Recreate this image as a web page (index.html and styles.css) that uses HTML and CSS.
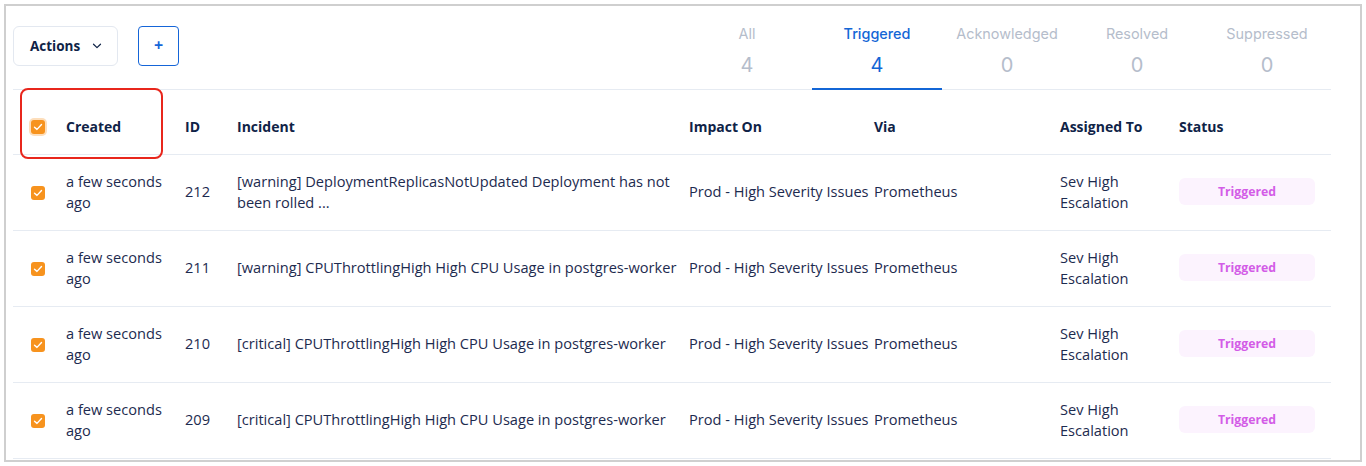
FILE: index.html
```html
<!DOCTYPE html>
<html>
<head>
<meta charset="utf-8">
<link rel="stylesheet" href="styles.css">
</head>
<body>
<div class="frame">
  <div class="topbar">
    <div class="tools">
      <button class="btn-actions">Actions
        <svg class="chev" width="10" height="6" viewBox="0 0 10 6"><path d="M1.5 1.2 L5 4.6 L8.5 1.2" fill="none" stroke="#0f2347" stroke-width="1.2" stroke-linecap="round" stroke-linejoin="round"/></svg>
      </button>
      <button class="btn-plus">+</button>
    </div>
    <div class="tabs">
      <div class="tab"><div class="tab-label">All</div><div class="tab-count">4</div></div>
      <div class="tab active"><div class="tab-label">Triggered</div><div class="tab-count">4</div></div>
      <div class="tab"><div class="tab-label">Acknowledged</div><div class="tab-count">0</div></div>
      <div class="tab"><div class="tab-label">Resolved</div><div class="tab-count">0</div></div>
      <div class="tab"><div class="tab-label">Suppressed</div><div class="tab-count">0</div></div>
    </div>
  </div>

  <div class="row head">
    <div class="c-check"><span class="cb glow"><svg width="10" height="8" viewBox="0 0 10 8"><path d="M1.5 4.2 L4 6.4 L8.5 1.5" fill="none" stroke="#fff" stroke-width="1.4" stroke-linecap="round" stroke-linejoin="round"/></svg></span></div>
    <div class="c-created">Created</div>
    <div class="c-id">ID</div>
    <div class="c-inc">Incident</div>
    <div class="c-imp">Impact On</div>
    <div class="c-via">Via</div>
    <div class="c-asg">Assigned To</div>
    <div class="c-st">Status</div>
    <div class="highlight"></div>
  </div>

  <div class="row">
    <div class="c-check"><span class="cb"><svg width="10" height="8" viewBox="0 0 10 8"><path d="M1.5 4.2 L4 6.4 L8.5 1.5" fill="none" stroke="#fff" stroke-width="1.4" stroke-linecap="round" stroke-linejoin="round"/></svg></span></div>
    <div class="c-created">a few seconds ago</div>
    <div class="c-id">212</div>
    <div class="c-inc">[warning] DeploymentReplicasNotUpdated Deployment has not been rolled ...</div>
    <div class="c-imp">Prod - High Severity Issues</div>
    <div class="c-via">Prometheus</div>
    <div class="c-asg">Sev High Escalation</div>
    <div class="c-st"><span class="badge">Triggered</span></div>
  </div>

  <div class="row">
    <div class="c-check"><span class="cb"><svg width="10" height="8" viewBox="0 0 10 8"><path d="M1.5 4.2 L4 6.4 L8.5 1.5" fill="none" stroke="#fff" stroke-width="1.4" stroke-linecap="round" stroke-linejoin="round"/></svg></span></div>
    <div class="c-created">a few seconds ago</div>
    <div class="c-id">211</div>
    <div class="c-inc">[warning] CPUThrottlingHigh High CPU Usage in postgres-worker</div>
    <div class="c-imp">Prod - High Severity Issues</div>
    <div class="c-via">Prometheus</div>
    <div class="c-asg">Sev High Escalation</div>
    <div class="c-st"><span class="badge">Triggered</span></div>
  </div>

  <div class="row">
    <div class="c-check"><span class="cb"><svg width="10" height="8" viewBox="0 0 10 8"><path d="M1.5 4.2 L4 6.4 L8.5 1.5" fill="none" stroke="#fff" stroke-width="1.4" stroke-linecap="round" stroke-linejoin="round"/></svg></span></div>
    <div class="c-created">a few seconds ago</div>
    <div class="c-id">210</div>
    <div class="c-inc">[critical] CPUThrottlingHigh High CPU Usage in postgres-worker</div>
    <div class="c-imp">Prod - High Severity Issues</div>
    <div class="c-via">Prometheus</div>
    <div class="c-asg">Sev High Escalation</div>
    <div class="c-st"><span class="badge">Triggered</span></div>
  </div>

  <div class="row">
    <div class="c-check"><span class="cb"><svg width="10" height="8" viewBox="0 0 10 8"><path d="M1.5 4.2 L4 6.4 L8.5 1.5" fill="none" stroke="#fff" stroke-width="1.4" stroke-linecap="round" stroke-linejoin="round"/></svg></span></div>
    <div class="c-created">a few seconds ago</div>
    <div class="c-id">209</div>
    <div class="c-inc">[critical] CPUThrottlingHigh High CPU Usage in postgres-worker</div>
    <div class="c-imp">Prod - High Severity Issues</div>
    <div class="c-via">Prometheus</div>
    <div class="c-asg">Sev High Escalation</div>
    <div class="c-st"><span class="badge">Triggered</span></div>
  </div>
</div>
</body>
</html>
```

FILE: styles.css
```css
* { box-sizing: border-box; }
html, body { margin: 0; padding: 0; background: #fff; }
body { font-family: "Open Sans", "Liberation Sans", sans-serif; color: #1d2b4f; }

.frame {
  margin: 4px;
  width: 1358px;
  height: 458px;
  border: 2px solid #cfcfcf;
  padding: 0 29px 0 7px;
  overflow: hidden;
}

.topbar {
  display: flex;
  justify-content: space-between;
  height: 84px;
  border-bottom: 1px solid #e6ebf2;
}
.tools { display: flex; gap: 20px; padding-top: 20px; }
.btn-actions {
  height: 40px;
  width: 105px;
  border: 1px solid #e3e8f0;
  border-radius: 6px;
  background: #fff;
  font-family: inherit;
  font-weight: 700;
  font-size: 13.5px;
  color: #0f2347;
  display: flex;
  align-items: center;
  padding: 0 0 0 16px;
  gap: 12px;
}
.btn-plus {
  height: 40px;
  width: 41px;
  border: 1px solid #1565d8;
  border-radius: 4px;
  background: #fff;
  color: #1565d8;
  font-family: inherit;
  font-size: 16px;
  font-weight: 700;
  line-height: 1;
  padding: 0 0 3px;
}

.tabs { display: flex; margin-right: -1px; }
.tab {
  width: 130px;
  text-align: center;
  padding-top: 19px;
  font-family: Inter, "Open Sans", sans-serif;
  color: #b5bdcb;
  margin-bottom: -1px;
}
.tab-label { font-size: 14.4px; line-height: 18px; }
.tab-count { font-size: 20px; line-height: 24px; margin-top: 10px; }
.tab.active { color: #1366d6; border-bottom: 2px solid #1366d6; }
.tab.active .tab-label { font-weight: 500; }

.row {
  position: relative;
  display: grid;
  grid-template-columns: 53px 119px 52px 452px 185px 186px 119px 151px;
  align-items: center;
  height: 76px;
  padding-bottom: 2px;
  border-bottom: 1px solid #e6ebf2;
  font-size: 14.6px;
  line-height: 21px;
}
.row.head {
  height: 65px;
  padding-top: 9px;
  padding-bottom: 0;
  font-size: 14px;
  font-weight: 700;
  color: #0f2347;
}
.row > div { padding-right: 6px; }
.c-check { padding-left: 18px; display: flex; }
.row:not(.head) .c-check { margin-top: 2px; }
.c-inc { padding-right: 10px !important; }
.c-imp { white-space: nowrap; }

.cb {
  width: 14px;
  height: 14px;
  border-radius: 3px;
  background: #f7931e;
  display: flex;
  align-items: center;
  justify-content: center;
}
.cb.glow { box-shadow: 0 0 0 2px rgba(247, 147, 30, 0.3); }

.badge {
  display: flex;
  align-items: center;
  justify-content: center;
  width: 136px;
  height: 27px;
  border-radius: 6px;
  background: #fcf3fe;
  color: #d35ce7;
  font-weight: 700;
  font-size: 12.3px;
}

.highlight {
  position: absolute;
  left: 7px;
  top: -2px;
  width: 143px;
  height: 71px;
  border: 2px solid #e8261c;
  border-radius: 8px;
  padding: 0;
}
```
